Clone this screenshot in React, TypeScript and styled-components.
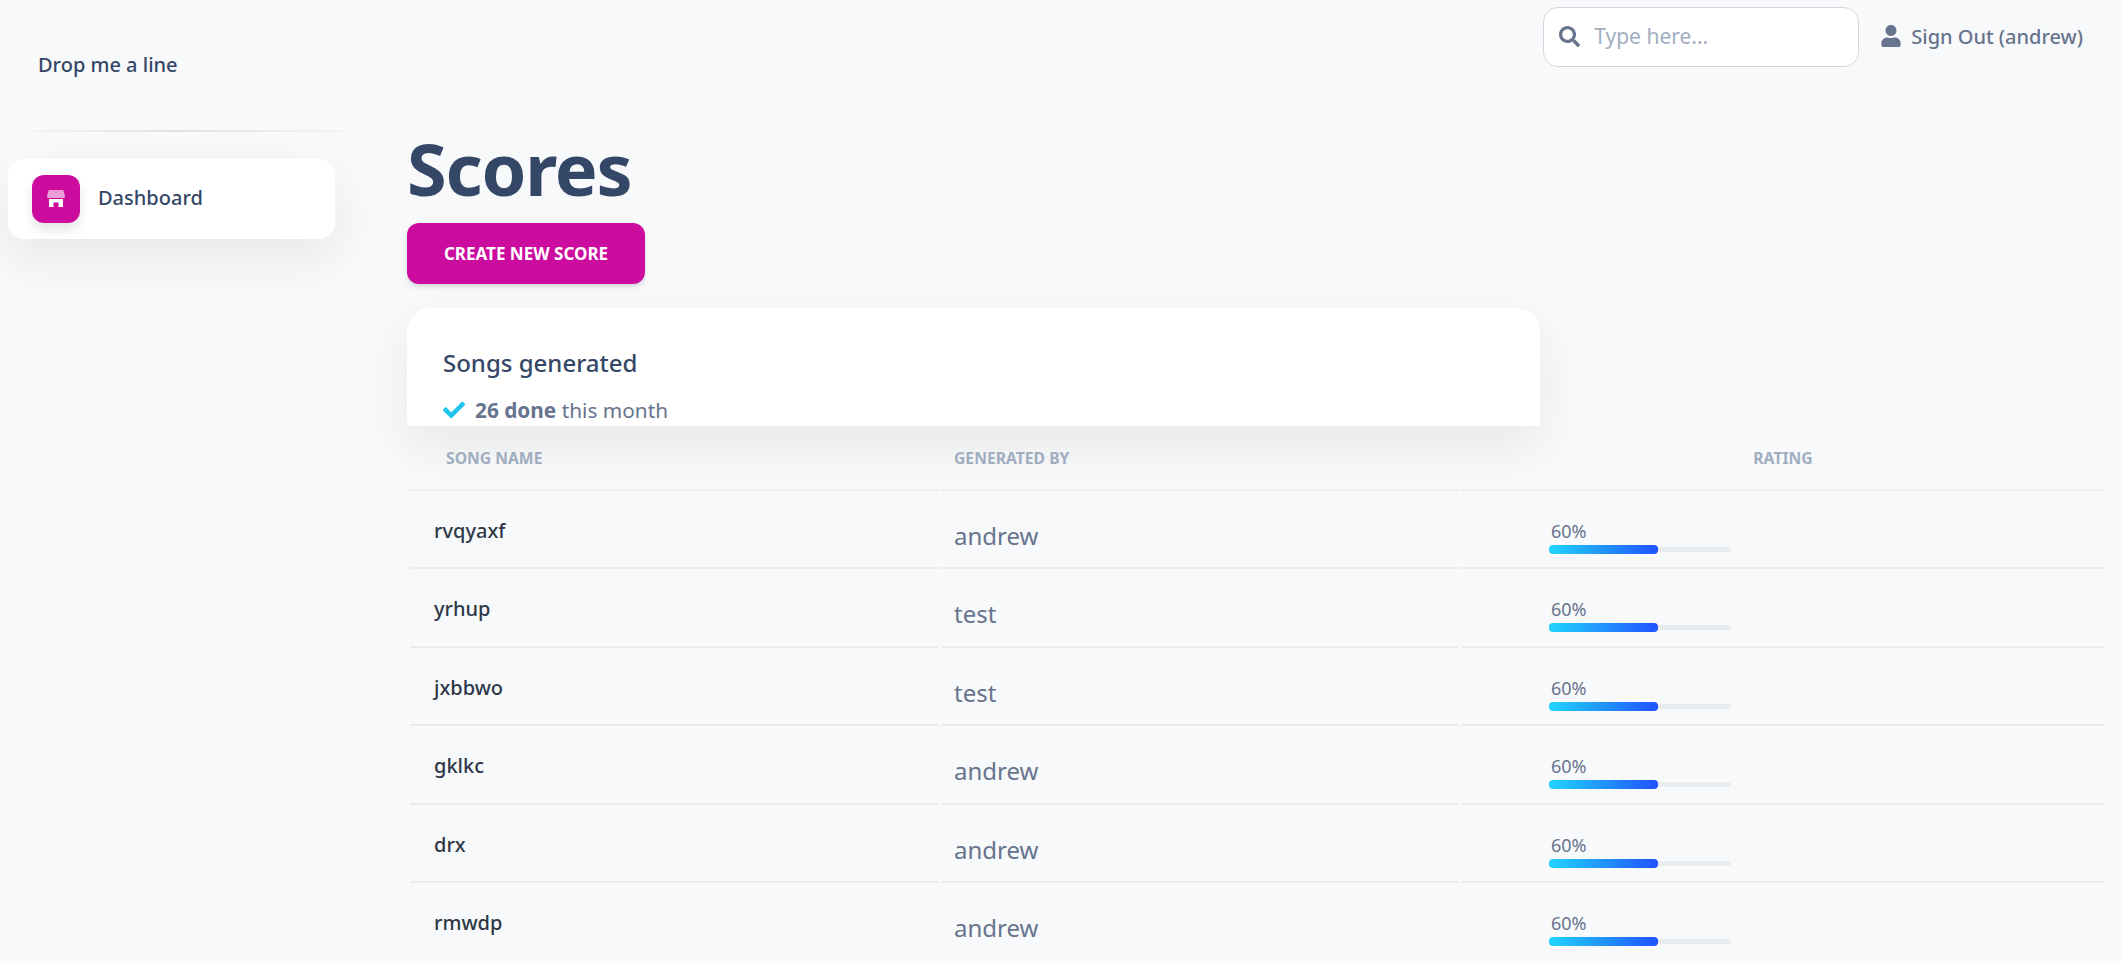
import { Fragment } from 'react';
import styled, { createGlobalStyle } from 'styled-components';
import { FaCheck, FaSearch, FaUser } from 'react-icons/fa';

const songs = [
  { name: 'rvqyaxf', by: 'andrew', rating: 60 },
  { name: 'yrhup', by: 'test', rating: 60 },
  { name: 'jxbbwo', by: 'test', rating: 60 },
  { name: 'gklkc', by: 'andrew', rating: 60 },
  { name: 'drx', by: 'andrew', rating: 60 },
  { name: 'rmwdp', by: 'andrew', rating: 60 },
];

const softShadow = '0 20px 50px 0 rgba(0, 0, 0, 0.07)';

const GlobalStyle = createGlobalStyle`
  html, body {
    margin: 0;
    padding: 0;
    background: #f8f9fa;
    font-family: "Noto Sans", "Open Sans", sans-serif;
    color: #344767;
    overflow: hidden;
  }
`;

const Page = styled.div`
  display: flex;
  height: 961px;
  overflow: hidden;
`;

const Sidebar = styled.aside`
  flex: 0 0 350px;
  display: flex;
  flex-direction: column;
`;

const Brand = styled.div`
  padding: 51px 0 0 38px;
  height: 79px;
  font-size: 20px;
  line-height: 28px;
  font-weight: 500;
  color: #344767;
`;

const Divider = styled.div`
  height: 2px;
  background: linear-gradient(90deg, rgba(224, 225, 226, 0) 0%, #e0e1e2 50%, rgba(224, 225, 226, 0.16) 100%);
`;

const NavItem = styled.div`
  margin: 27px 15px 0 8px;
  height: 80px;
  padding-left: 24px;
  display: flex;
  align-items: center;
  gap: 18px;
  background: #fff;
  border-radius: 16px;
  box-shadow: ${softShadow};
`;

const NavIcon = styled.span`
  width: 48px;
  height: 48px;
  border-radius: 12px;
  background: #cb0c9f;
  display: flex;
  align-items: center;
  justify-content: center;
  box-shadow: 0 7px 11px rgba(0, 0, 0, 0.1);
`;

const NavLabel = styled.span`
  padding-bottom: 2px;
  font-size: 20px;
  line-height: 26px;
  color: #344767;
  font-weight: 500;
`;

const Main = styled.main`
  flex: 1;
  min-width: 0;
  padding: 7px 15px 0 57px;
  display: flex;
  flex-direction: column;
`;

const TopBar = styled.div`
  display: flex;
  justify-content: flex-end;
  align-items: center;
  gap: 21px;
  height: 60px;
  padding-right: 24px;
`;

const SearchBox = styled.div`
  width: 316px;
  height: 60px;
  box-sizing: border-box;
  padding: 0 0 2px 15px;
  display: flex;
  align-items: center;
  gap: 14px;
  background: #fff;
  border: 1px solid #d4d6dd;
  border-radius: 15px;
  color: #67748e;
  font-size: 21px;
`;

const SearchInput = styled.input`
  flex: 1;
  min-width: 0;
  border: 0;
  outline: 0;
  padding: 0;
  background: transparent;
  font: inherit;
  color: #344767;

  &::placeholder {
    color: #a0aec0;
    opacity: 1;
  }
`;

const SignOut = styled.div`
  display: flex;
  align-items: center;
  gap: 9px;
  padding-bottom: 2px;
  color: #67748e;
  font-size: 20px;
  font-weight: 500;
`;

const Title = styled.h1`
  margin: 0 0 8px;
  padding-top: 54px;
  font-size: 72px;
  line-height: 94px;
  font-weight: 700;
  letter-spacing: -1.2px;
  color: #344767;
`;

const PrimaryButton = styled.button`
  align-self: flex-start;
  width: 238px;
  height: 61px;
  flex: none;
  border: 0;
  border-radius: 12px;
  background: #cb0c9f;
  color: #fff;
  font: inherit;
  font-size: 17px;
  font-weight: 700;
  text-transform: uppercase;
  box-shadow: 0 4px 7px -1px rgba(0, 0, 0, 0.11), 0 2px 4px -1px rgba(0, 0, 0, 0.07);
`;

const Card = styled.section`
  margin-top: 24px;
  width: 1133px;
  height: 118px;
  flex: none;
  box-sizing: border-box;
  padding: 39px 36px 0;
  background: #fff;
  border-radius: 24px 24px 0 0;
  overflow: hidden;
  box-shadow: ${softShadow};
`;

const CardTitle = styled.h2`
  margin: 0;
  font-size: 24px;
  line-height: 32px;
  font-weight: 500;
  color: #344767;
`;

const CardSub = styled.div`
  margin-top: 17px;
  display: flex;
  align-items: center;
  gap: 10px;
  font-size: 20.8px;
  line-height: 28px;
  color: #67748e;

  svg {
    color: #21c4ee;
  }

  b {
    font-weight: 700;
  }
`;

const Table = styled.div`
  display: grid;
  grid-template-columns: 529px 517px 642px;
  column-gap: 3px;
  margin-left: 3px;
`;

const HeadCell = styled.div<{ $align?: string; $inset: number }>`
  height: 65px;
  box-sizing: border-box;
  padding: 21px 0 0 ${(p) => p.$inset}px;
  text-align: ${(p) => p.$align || 'left'};
  font-size: 15.7px;
  line-height: 22px;
  font-weight: 700;
  text-transform: uppercase;
  color: #a0aec0;
  border-bottom: 2px solid #eef0f2;
`;

const Cell = styled.div`
  height: 78.4px;
  box-sizing: border-box;
  border-bottom: 2px solid #e9ecef;

  &:nth-last-child(-n + 3) {
    border-bottom: 0;
  }
`;

const NameCell = styled(Cell)`
  padding: 25px 0 0 24px;
  font-size: 20px;
  line-height: 30px;
  font-weight: 500;
  color: #2d3748;
`;

const ByCell = styled(Cell)`
  padding: 28px 0 0 12px;
  font-size: 24px;
  line-height: 34px;
  color: #67748e;
`;

const RatingCell = styled(Cell)`
  padding: 29px 0 0 87px;
`;

const RatingLabel = styled.div`
  padding-left: 2px;
  font-size: 18px;
  line-height: 22px;
  color: #67748e;
`;

const Track = styled.div`
  position: relative;
  width: 182px;
  height: 5px;
  margin-top: 5px;
  border-radius: 3px;
  background: #e9ecef;
`;

const Fill = styled.div`
  position: absolute;
  left: 0;
  top: -2px;
  height: 9px;
  border-radius: 4px;
  background: linear-gradient(90deg, #21d4fd 0%, #2152ff 100%);
`;

function ShopIcon() {
  return (
    <svg width="18" height="18" viewBox="0 0 18 18">
      <path fill="#fff" opacity="0.6" d="M3 0h12a2 2 0 0 1 2 2l1 4.5a1.5 1.5 0 0 1-1.5 1.5h-15A1.5 1.5 0 0 1 0 6.5L1 2a2 2 0 0 1 2-2z" />
      <path fill="#fff" d="M2 9h14v8h-4.5v-4.5h-5V17H2z" />
    </svg>
  );
}

export default function App() {
  return (
    <Page>
      <GlobalStyle />
      <Sidebar>
        <Brand>Drop me a line</Brand>
        <Divider />
        <NavItem>
          <NavIcon>
            <ShopIcon />
          </NavIcon>
          <NavLabel>Dashboard</NavLabel>
        </NavItem>
      </Sidebar>
      <Main>
        <TopBar>
          <SearchBox>
            <FaSearch size={21} />
            <SearchInput placeholder="Type here..." />
          </SearchBox>
          <SignOut>
            <FaUser size={22} />
            Sign Out (andrew)
          </SignOut>
        </TopBar>
        <Title>Scores</Title>
        <PrimaryButton>Create new score</PrimaryButton>
        <Card>
          <CardTitle>Songs generated</CardTitle>
          <CardSub>
            <FaCheck size={22} />
            <span>
              <b>26 done</b> this month
            </span>
          </CardSub>
        </Card>
        <Table>
          <HeadCell $inset={36}>Song name</HeadCell>
          <HeadCell $inset={12}>Generated by</HeadCell>
          <HeadCell $inset={0} $align="center">
            Rating
          </HeadCell>
          {songs.map((song) => (
            <Fragment key={song.name}>
              <NameCell>{song.name}</NameCell>
              <ByCell>{song.by}</ByCell>
              <RatingCell>
                <RatingLabel>{song.rating}%</RatingLabel>
                <Track>
                  <Fill style={{ width: `${song.rating}%` }} />
                </Track>
              </RatingCell>
            </Fragment>
          ))}
        </Table>
      </Main>
    </Page>
  );
}
